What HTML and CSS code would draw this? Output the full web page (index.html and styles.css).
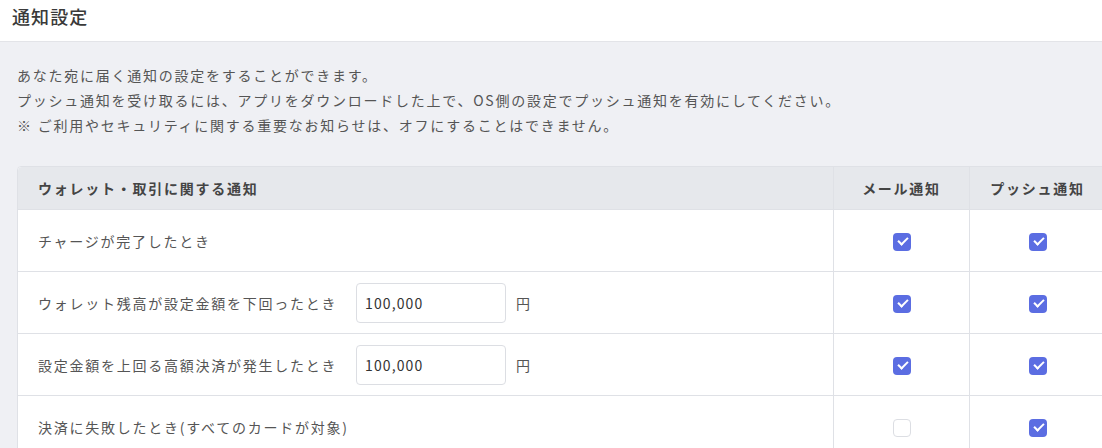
FILE: index.html
```html
<!DOCTYPE html>
<html lang="ja">
<head>
	<meta charset="utf-8">
	<title>通知設定</title>
	<link rel="stylesheet" href="styles.css">
</head>
<body>
	<header class="page-head">
		<h1>通知設定</h1>
	</header>
	<main class="page-body">
		<p class="lead">
			あなた宛に届く通知の設定をすることができます。<br>
			プッシュ通知を受け取るには、アプリをダウンロードした上で、OS側の設定でプッシュ通知を有効にしてください。<br>
			※ ご利用やセキュリティに関する重要なお知らせは、オフにすることはできません。
		</p>
		<table class="notice-table">
			<thead>
				<tr>
					<th class="col-name">ウォレット・取引に関する通知</th>
					<th class="col-check">メール通知</th>
					<th class="col-check">プッシュ通知</th>
				</tr>
			</thead>
			<tbody>
				<tr>
					<td>チャージが完了したとき</td>
					<td class="check"><span class="box on"></span></td>
					<td class="check"><span class="box on"></span></td>
				</tr>
				<tr>
					<td>
						<div class="with-amount">
							<span class="label">ウォレット残高が設定金額を下回ったとき</span>
							<input class="amount" type="text" value="100,000">
							<span>円</span>
						</div>
					</td>
					<td class="check"><span class="box on"></span></td>
					<td class="check"><span class="box on"></span></td>
				</tr>
				<tr>
					<td>
						<div class="with-amount">
							<span class="label">設定金額を上回る高額決済が発生したとき</span>
							<input class="amount" type="text" value="100,000">
							<span>円</span>
						</div>
					</td>
					<td class="check"><span class="box on"></span></td>
					<td class="check"><span class="box on"></span></td>
				</tr>
				<tr>
					<td>決済に失敗したとき(すべてのカードが対象)</td>
					<td class="check"><span class="box off"></span></td>
					<td class="check"><span class="box on"></span></td>
				</tr>
			</tbody>
		</table>
	</main>
</body>
</html>
```
FILE: styles.css
```css
:root {
	--txt: #555;
	--head-txt: #444;
	--bg: #eff0f4;
	--line: #dfe1e6;
	--thead: #e6e8ec;
	--accent: #5b6de2;
}
html, body {
	margin: 0;
	overflow: hidden;
}
body {
	font-family: "Noto Sans CJK JP", "Noto Sans", sans-serif;
	font-size: 14px;
	letter-spacing: 0.125em;
	color: var(--txt);
	background-color: var(--bg);
}
.page-head {
	background-color: white;
	height: 42px;
	border-bottom: solid 1px #e3e4e8;
	box-sizing: border-box;
	padding: 4px 12px 0;
}
.page-head h1 {
	margin: 0;
	font-size: 18px;
	font-weight: 500;
	letter-spacing: 0.06em;
	color: #3a3a3a;
	line-height: 24px;
}
.page-body {
	padding: 21px 0 0 17px;
}
.lead {
	margin: 0 0 28px;
	line-height: 25px;
}
.notice-table {
	width: 1089px;
	table-layout: fixed;
	border-collapse: separate;
	border-spacing: 0;
	background-color: white;
	border: solid 1px var(--line);
	border-radius: 4px;
}
.notice-table th {
	background-color: var(--thead);
	color: var(--head-txt);
	font-weight: bold;
	height: 42px;
	padding: 0 20px;
	text-align: left;
	border-bottom: solid 1px var(--line);
}
.notice-table th:first-child {
	border-top-left-radius: 4px;
}
.notice-table th.col-check {
	text-align: center;
	width: 135px;
	padding: 0;
	border-left: solid 1px var(--line);
}
.notice-table td {
	height: 61px;
	padding: 0 20px;
	border-bottom: solid 1px var(--line);
}
.notice-table tr:last-child td {
	border-bottom: none;
}
.notice-table td.check {
	text-align: center;
	padding: 0;
	border-left: solid 1px var(--line);
}
.with-amount {
	display: flex;
	align-items: center;
}
.with-amount .label {
	width: 300px;
}
.amount {
	width: 150px;
	height: 40px;
	box-sizing: border-box;
	margin: 0 10px 0 18px;
	padding: 0 8px;
	border: solid 1px #dcdee3;
	border-radius: 4px;
	font-family: inherit;
	font-size: 14px;
	letter-spacing: 0.08em;
	color: #333;
}
.box {
	display: inline-block;
	width: 18px;
	height: 18px;
	box-sizing: border-box;
	border-radius: 4px;
	vertical-align: middle;
	position: relative;
}
.box.on {
	background-color: var(--accent);
}
.box.on::after {
	content: "";
	position: absolute;
	left: 5px;
	top: 4px;
	width: 8px;
	height: 4px;
	border-left: solid 2px white;
	border-bottom: solid 2px white;
	transform: rotate(-45deg);
}
.box.off {
	border: solid 1px #dcdee3;
	background-color: white;
}
```
